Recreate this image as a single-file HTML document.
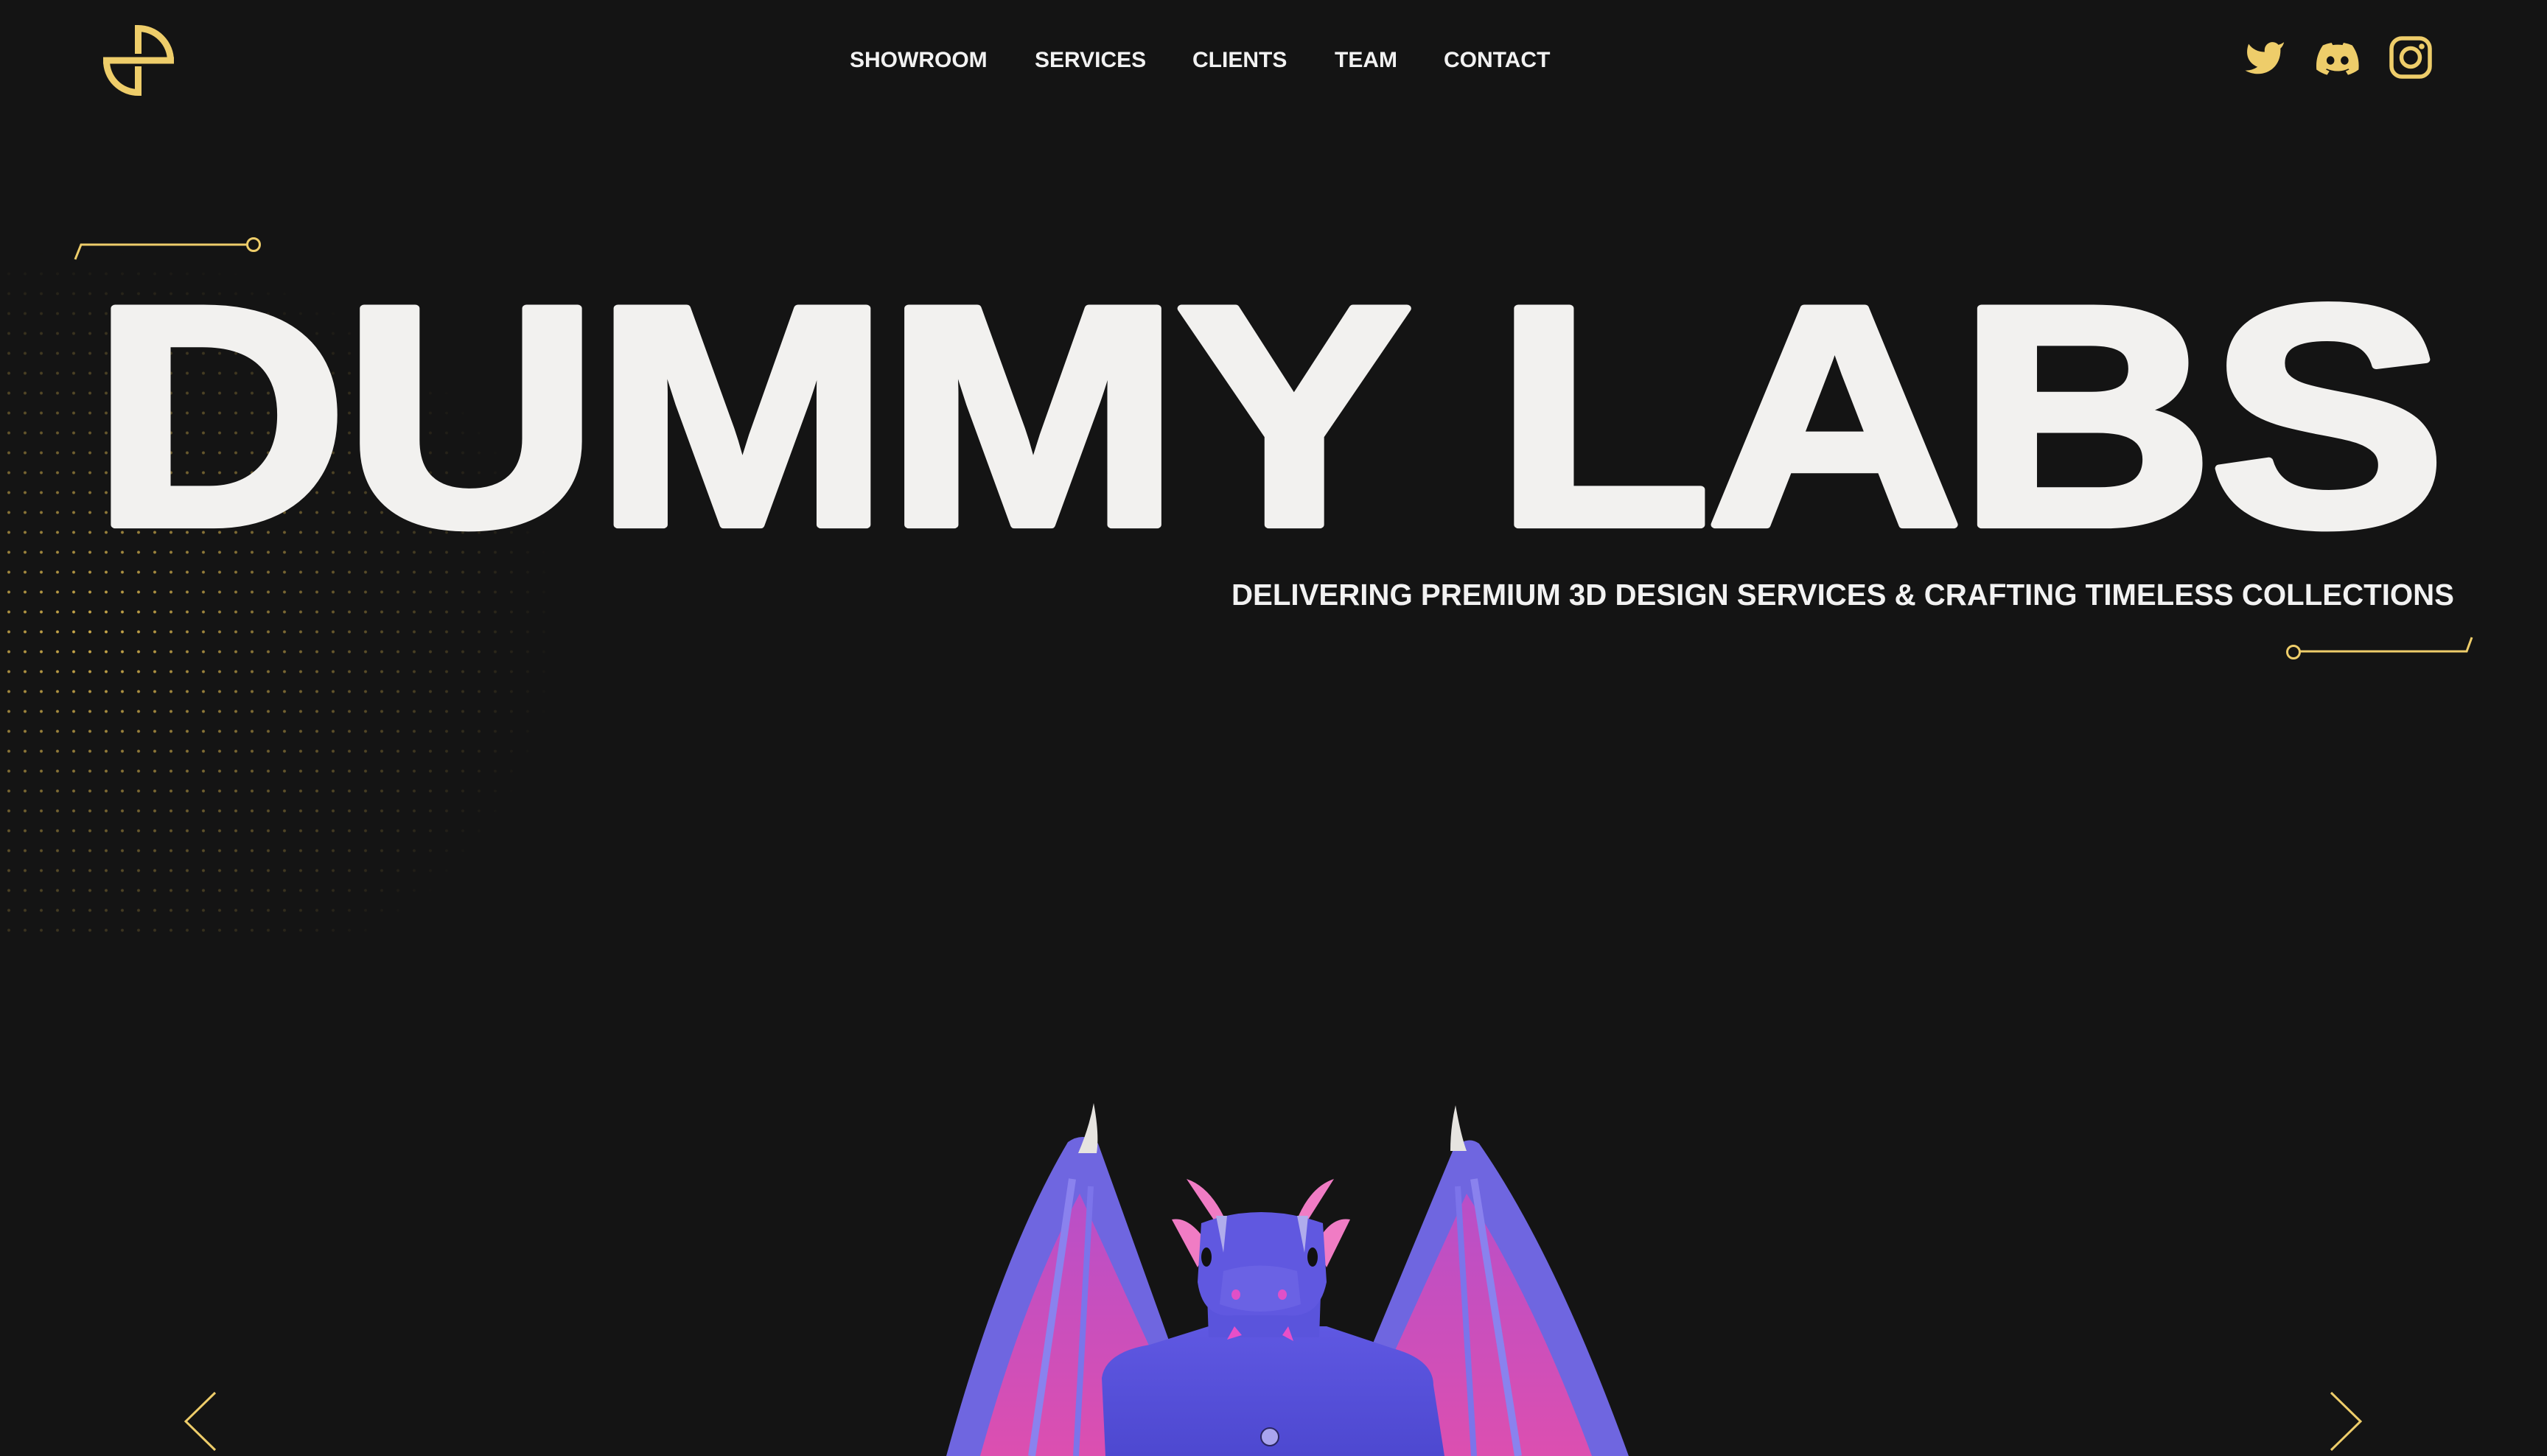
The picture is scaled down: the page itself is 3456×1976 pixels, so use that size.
<!DOCTYPE html>
<html><head><meta charset="utf-8"><style>
html,body{margin:0;padding:0;background:#141414;width:3456px;height:1976px;overflow:hidden;position:relative;font-family:"Liberation Sans",sans-serif}
.dots{position:absolute;left:0;top:300px;width:900px;height:980px;
background-image:radial-gradient(circle,#d9b54e 1.6px,transparent 2.4px);background-size:22px 27px;background-position:1px 4px;
-webkit-mask-image:radial-gradient(ellipse 640px 520px at 120px 560px,rgba(0,0,0,.95) 0%,rgba(0,0,0,.4) 55%,transparent 100%);
mask-image:radial-gradient(ellipse 640px 520px at 120px 560px,rgba(0,0,0,.95) 0%,rgba(0,0,0,.4) 55%,transparent 100%)}
.nav a{position:absolute;top:65px;color:#f2f2f2;font-weight:bold;font-size:30px;text-decoration:none;letter-spacing:0}
svg{position:absolute;left:0;top:0}
</style></head><body>
<div class="dots"></div>
<div class="nav">
<a style="left:1153px">SHOWROOM</a>
<a style="left:1404px">SERVICES</a>
<a style="left:1618px">CLIENTS</a>
<a style="left:1811px">TEAM</a>
<a style="left:1959px">CONTACT</a>
</div>
<svg width="3456" height="1976" viewBox="0 0 3456 1976">
<g fill="none" stroke="#eecd6a" stroke-width="9">
<path d="M187.5 73 V38.5 A44 44 0 0 1 231.5 82.5"/>
<path d="M140 82 H236"/>
<path d="M144.5 82 A43 43 0 0 0 187.5 125.5 V90"/>
</g>
<g fill="#eecd6a">
<path transform="translate(3044,50) scale(2.4)" d="M23 3a10.9 10.9 0 0 1-3.14 1.53 4.48 4.48 0 0 0-7.86 3v1A10.66 10.66 0 0 1 3 4s-4 9 5 13a11.64 11.64 0 0 1-7 2c9 5 20 0 20-11.5a4.5 4.5 0 0 0-.08-.83A7.72 7.72 0 0 0 23 3z"/>
<path fill-rule="evenodd" transform="translate(3143,51) scale(2.4)" d="M20.3 4.4A19.8 19.8 0 0 0 15.4 2.9l-.6 1.3a18.3 18.3 0 0 0-5.5 0L8.6 2.9a19.7 19.7 0 0 0-4.9 1.5C.5 9.1-.3 13.6.1 18.1a19.9 19.9 0 0 0 6 3l1.3-2.1a13 13 0 0 1-2-1l.5-.4a14.2 14.2 0 0 0 12.2 0l.5.4a13 13 0 0 1-2 1l1.3 2.1a19.8 19.8 0 0 0 6-3c.5-5.2-.8-9.7-3.6-13.7zM8 15.3c-1.2 0-2.2-1.1-2.2-2.4S6.8 10.5 8 10.5s2.2 1.1 2.2 2.4-1 2.4-2.2 2.4zm8 0c-1.2 0-2.2-1.1-2.2-2.4s1-2.4 2.2-2.4 2.2 1.1 2.2 2.4-1 2.4-2.2 2.4z"/>
</g>
<g fill="none" stroke="#eecd6a" stroke-width="5.5">
<rect x="3245" y="52" width="52" height="52" rx="14"/>
<circle cx="3271" cy="78" r="12.5"/>
</g>
<circle cx="3286" cy="63" r="3.8" fill="#eecd6a"/>
<g fill="none" stroke="#eecd6a" stroke-width="3">
<path d="M102 352 L110 332 H335"/>
<circle cx="344" cy="332" r="8.5"/>
<circle cx="3112" cy="885" r="8.5"/>
<path d="M3121 884 H3347 L3354 865"/>
</g>
<text transform="translate(124,712) scale(1.17,1.035)" x="0" y="0" font-family="Liberation Sans" font-weight="bold" font-size="412" letter-spacing="-6" fill="#f2f1ef" stroke="#f2f1ef" stroke-width="10" stroke-linejoin="round">DUMMY LABS</text>
<text x="1671" y="821" textLength="1659" lengthAdjust="spacingAndGlyphs" font-family="Liberation Sans" font-weight="bold" font-size="41" fill="#f2f2f2">DELIVERING PREMIUM 3D DESIGN SERVICES &amp; CRAFTING TIMELESS COLLECTIONS</text>
<g fill="none" stroke="#eecd6a" stroke-width="3">
<path d="M292 1890 L252 1929 L292 1968"/>
<path d="M3163 1890 L3203 1929 L3163 1968"/>
</g>
<defs>
<linearGradient id="pk" x1="0" y1="0" x2="0" y2="1"><stop offset="0" stop-color="#b84fc8"/><stop offset="1" stop-color="#dc4fb0"/></linearGradient>
<linearGradient id="bd" x1="0" y1="0" x2="0" y2="1"><stop offset="0" stop-color="#5f58e2"/><stop offset="1" stop-color="#4d48d0"/></linearGradient>
</defs>
<path d="M1449 1550 Q1470 1535 1490 1552 L1590 1830 L1520 1976 L1284 1976 Q1360 1700 1449 1550z" fill="#6f66e0"/>
<path d="M1465 1620 L1570 1850 L1510 1976 L1330 1976 Q1390 1760 1465 1620z" fill="url(#pk)"/>
<path d="M1455 1600 L1400 1976" stroke="#8a82ee" stroke-width="10" fill="none"/>
<path d="M1480 1610 L1460 1976" stroke="#7c74ea" stroke-width="8" fill="none"/>
<path d="M2007 1552 Q1990 1540 1972 1560 L1860 1830 L1930 1976 L2210 1976 Q2110 1700 2007 1552z" fill="#6f66e0"/>
<path d="M1990 1620 L1885 1850 L1945 1976 L2160 1976 Q2080 1760 1990 1620z" fill="url(#pk)"/>
<path d="M2000 1600 L2060 1976" stroke="#8a82ee" stroke-width="10" fill="none"/>
<path d="M1978 1610 L2000 1976" stroke="#7c74ea" stroke-width="8" fill="none"/>
<path d="M1484 1497 Q1492 1540 1488 1565 L1463 1565 Q1478 1530 1484 1497z" fill="#e6e4e0"/>
<path d="M1975 1500 Q1982 1540 1990 1562 L1968 1562 Q1968 1530 1975 1500z" fill="#e6e4e0"/>
<path d="M1500 1976 L1495 1870 Q1500 1835 1560 1825 L1640 1800 L1800 1800 L1890 1830 Q1945 1845 1945 1880 L1960 1976z" fill="url(#bd)"/>
<path d="M1636 1700 L1640 1815 L1790 1815 L1794 1700z" fill="#5a54dc"/>
<path d="M1610 1600 Q1640 1610 1660 1650 L1650 1660z" fill="#f07cc4"/>
<path d="M1810 1600 Q1780 1610 1762 1650 L1772 1660z" fill="#f07cc4"/>
<path d="M1590 1655 Q1615 1650 1640 1690 L1625 1720z" fill="#f07cc4"/>
<path d="M1832 1655 Q1805 1650 1785 1690 L1800 1720z" fill="#f07cc4"/>
<path d="M1630 1660 Q1710 1630 1795 1660 L1800 1740 Q1790 1790 1745 1785 L1675 1785 Q1632 1790 1625 1740z" fill="#6058e0"/>
<ellipse cx="1637" cy="1706" rx="7" ry="13" fill="#111"/>
<ellipse cx="1781" cy="1706" rx="7" ry="13" fill="#111"/>
<path d="M1660 1725 Q1710 1710 1760 1725 L1765 1770 Q1710 1790 1655 1770z" fill="#6a62e4"/>
<ellipse cx="1677" cy="1757" rx="6" ry="7" fill="#e050c8"/>
<ellipse cx="1740" cy="1757" rx="6" ry="7" fill="#e050c8"/>
<path d="M1665 1818 L1675 1800 L1685 1812z M1740 1812 L1748 1800 L1755 1820z" fill="#e84fc8"/>
<path d="M1650 1650 L1660 1700 L1665 1650z M1760 1650 L1770 1700 L1775 1650z" fill="#b0acec"/>
<circle cx="1723" cy="1950" r="12" fill="#a9a4ee" stroke="#2a2660" stroke-width="2"/>
</svg>
</body></html>
